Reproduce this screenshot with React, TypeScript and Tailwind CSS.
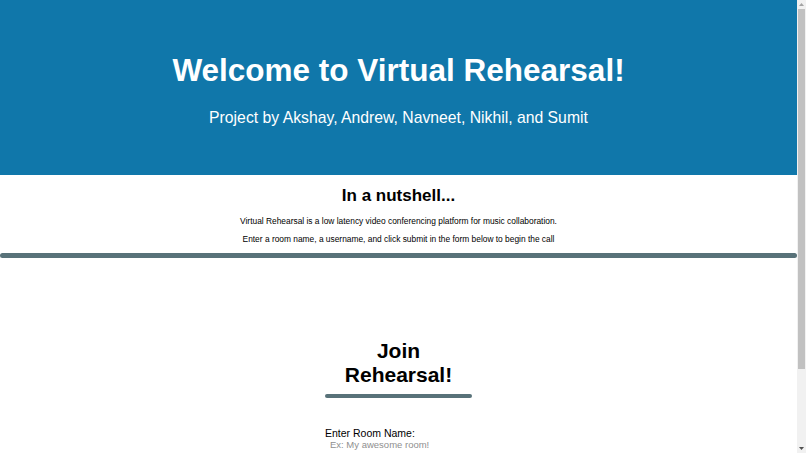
const font = { fontFamily: '"Liberation Sans", Arial, sans-serif' }

const ScrollBar = () => (
    <aside className="flex w-[9px] shrink-0 flex-col bg-[#f1f1f1]">
        <div className="flex h-[9px] items-center justify-center">
            <svg width="5" height="3" viewBox="0 0 5 3"><path d="M0 3 L2.5 0 L5 3 Z" fill="#a3a3a3" /></svg>
        </div>
        <div className="mx-[1px] h-[360px] bg-[#c1c1c1]" />
        <div className="flex-1" />
        <div className="flex h-[9px] items-center justify-center">
            <svg width="5" height="3" viewBox="0 0 5 3"><path d="M0 0 L2.5 3 L5 0 Z" fill="#505050" /></svg>
        </div>
    </aside>
)

export default function App() {
    return (
        <div className="flex h-[453px] overflow-hidden bg-white text-black" style={font}>
            <main className="min-w-0 flex-1 overflow-y-auto [scrollbar-width:none]">
                <header className="flex h-[175px] flex-col items-center bg-[#1077aa] pt-[51px] text-white">
                    <h1 className="text-[31.5px] font-bold leading-[38px]">Welcome to Virtual Rehearsal!</h1>
                    <p className="mt-[19px] text-[15.75px] leading-[20px]">Project by Akshay, Andrew, Navneet, Nikhil, and Sumit</p>
                </header>

                <section className="flex flex-col items-center pt-[11px]">
                    <h2 className="text-[17px] font-bold leading-[20px]">In a nutshell...</h2>
                    <p className="mt-[10px] text-[8.4px] leading-[10px] text-black">
                        Virtual Rehearsal is a low latency video conferencing platform for music collaboration.
                    </p>
                    <p className="mt-[8px] text-[8.4px] leading-[10px] text-black">
                        Enter a room name, a username, and click submit in the form below to begin the call
                    </p>
                </section>
                <div className="mt-[9px] h-[5px] w-full rounded-full bg-[#587279]" />

                <section className="flex flex-col items-center pt-[81px] pb-[20px]">
                    <div className="w-[147px]">
                        <h2 className="text-center text-[21px] font-bold leading-[24px]">Join Rehearsal!</h2>
                        <div className="mt-[7px] h-[4px] w-full rounded-full bg-[#587279]" />
                        <form className="mt-[29px] flex flex-col" onSubmit={(e) => e.preventDefault()}>
                            <label className="text-[10.5px] leading-[12px]">Enter Room Name:</label>
                            <input
                                className="ml-[5px] w-[140px] text-[9.5px] leading-[12px] outline-none placeholder:text-[#8f8f8f]"
                                placeholder="Ex: My awesome room!"
                            />
                            <label className="mt-[24px] text-[10.5px] leading-[12px]">Enter Username:</label>
                            <input
                                className="ml-[5px] w-[140px] text-[9.5px] leading-[12px] outline-none placeholder:text-[#8f8f8f]"
                                placeholder="Ex: Akshay"
                            />
                            <button className="mt-[14px] self-center rounded bg-[#1077aa] px-3 py-1 text-[10px] text-white">
                                Submit
                            </button>
                        </form>
                    </div>
                </section>
            </main>
            <ScrollBar />
        </div>
    )
}
